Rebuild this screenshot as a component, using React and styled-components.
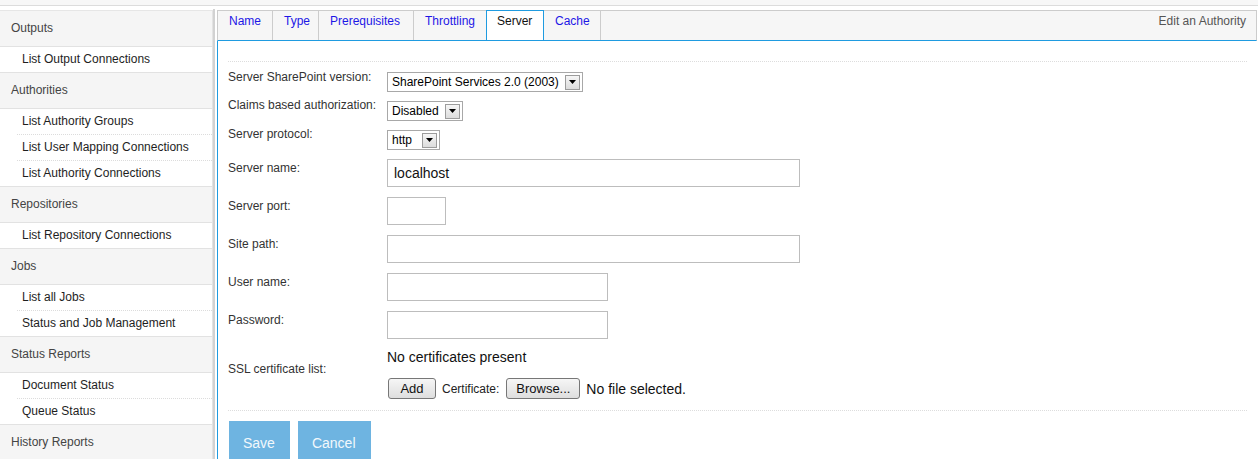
import React from "react";
import styled, { createGlobalStyle } from "styled-components";

const Global = createGlobalStyle`
	html, body {
		margin: 0;
		padding: 0;
		overflow: hidden;
		background: #fff;
		font-family: "Liberation Sans", Arial, sans-serif;
	}
`;

const BLUE = "#1f9be0";

const TopStrip = styled.div`
	height: 5px;
	background: #f7f7f7;
	border-bottom: 1px solid #dcdcdc;
`;

const Layout = styled.div`
	display: flex;
	margin-top: 4px;
	align-items: stretch;
`;

const Sidebar = styled.nav`
	width: 212px;
	flex: none;
	border-top: 1px solid #e6e6e6;
	border-right: 1px solid #e3e3e3;
`;

const GroupHeader = styled.div`
	box-sizing: border-box;
	height: 36px;
	display: flex;
	align-items: center;
	padding: 0 0 2px 11px;
	background: #f5f5f5;
	border-bottom: 1px solid #e2e2e2;
	font-size: 12px;
	color: #444;
`;

const NavItem = styled.div`
	box-sizing: border-box;
	height: 26px;
	display: flex;
	align-items: center;
	padding-bottom: 1px;
	margin-left: ${(p) => (p.$last ? "0" : "17px")};
	padding-left: ${(p) => (p.$last ? "22px" : "5px")};
	border-bottom: 1px ${(p) => (p.$last ? "solid #e2e2e2" : "dotted #dcdcdc")};
	font-size: 12px;
	color: #1e1e1e;
`;

const Divider = styled.div`
	width: 2px;
	flex: none;
	background: #d2d2d2;
	margin-top: -1px;
`;

const Main = styled.main`
	flex: 1;
	margin-left: 2px;
	margin-right: 1px;
	min-width: 0;
`;

const TabBar = styled.div`
	display: flex;
	height: 29px;
	background: #f6f6f6;
	border: 1px solid #cccccc;
	border-bottom: 1px solid ${BLUE};
`;

const Tab = styled.div`
	box-sizing: border-box;
	width: ${(p) => p.$width}px;
	padding: 3px 0 0 11px;
	font-size: 12px;
	line-height: 14px;
	color: ${(p) => (p.$active ? "#111" : "#1d17e6")};
	background: ${(p) => (p.$active ? "#fff" : "transparent")};
	border-right: 1px solid ${(p) => (p.$active ? BLUE : "#cccccc")};
	${(p) =>
		p.$active &&
		`
		border-left: 1px solid ${BLUE};
		border-top: 1px solid ${BLUE};
		margin: -1px 0 0 -1px;
		padding-left: 10px;
	`}
`;

const PageTitle = styled.div`
	margin-left: auto;
	padding: 3px 10px 0 0;
	font-size: 12px;
	line-height: 14px;
	color: #555;
`;

const Panel = styled.section`
	border-left: 1px solid ${BLUE};
	padding: 20px 10px 0 10px;
	min-height: 460px;
`;

const Rule = styled.div`
	border-top: 1px dotted #dddddd;
`;

const Form = styled.div`
	padding-top: 7px;
	padding-bottom: 11px;
`;

const Row = styled.div`
	display: flex;
	align-items: flex-start;
	margin-bottom: ${(p) => p.$gap}px;
`;

const Label = styled.div`
	width: 159px;
	flex: none;
	padding-top: ${(p) => p.$pad || 0}px;
	font-size: 12px;
	line-height: 14px;
	color: #333;
`;

const SelectBox = styled.div`
	box-sizing: border-box;
	width: ${(p) => p.$width}px;
	height: 20px;
	margin-top: 3px;
	display: flex;
	align-items: center;
	padding-left: 4px;
	border: 1px solid #a8a8a8;
	background: #fff;
`;

const SelectText = styled.span`
	flex: 1;
	font-size: 12px;
	color: #000;
	white-space: nowrap;
`;

const ArrowButton = styled.span`
	box-sizing: border-box;
	width: 15px;
	height: 15px;
	margin-right: 2px;
	display: flex;
	align-items: center;
	justify-content: center;
	border: 1px solid #9c9c9c;
	background: linear-gradient(#f6f6f6, #dcdcdc);
`;

const TextInput = styled.div`
	box-sizing: border-box;
	width: ${(p) => p.$width}px;
	height: 28px;
	display: flex;
	align-items: center;
	padding-left: 6px;
	border: 1px solid #bdbdbd;
	font-size: 14px;
	color: #111;
`;

const CertBlock = styled.div`
	display: flex;
	flex-direction: column;
`;

const CertNote = styled.div`
	font-size: 14px;
	line-height: 16px;
	color: #111;
`;

const CertLine = styled.div`
	display: flex;
	align-items: center;
	margin-top: 13px;
	font-size: 12px;
	color: #222;
`;

const PlainButton = styled.span`
	box-sizing: border-box;
	display: inline-flex;
	align-items: center;
	justify-content: center;
	width: ${(p) => p.$width}px;
	height: 21px;
	margin: 0 ${(p) => p.$after}px 0 ${(p) => p.$before || 0}px;
	border: 1px solid #777;
	border-radius: 3px;
	background: linear-gradient(#f6f6f6, #dedede);
	font-size: 13px;
	color: #111;
`;

const FileNote = styled.span`
	font-size: 14px;
	color: #111;
`;

const Actions = styled.div`
	display: flex;
	gap: 8px;
	padding: 10px 0 0 1px;
`;

const ActionButton = styled.div`
	height: 43px;
	padding: 0 15px 0 14px;
	display: flex;
	align-items: center;
	background: #6eb4e1;
	color: #f2f8fc;
	font-size: 14px;
`;

function Arrow() {
	return (
		<ArrowButton>
			<svg width="7" height="4" viewBox="0 0 7 4">
				<polygon points="0,0 7,0 3.5,4" fill="#000" />
			</svg>
		</ArrowButton>
	);
}

function Select({ width, value }) {
	return (
		<SelectBox $width={width}>
			<SelectText>{value}</SelectText>
			<Arrow />
		</SelectBox>
	);
}

const nav = [
	{ title: "Outputs", items: ["List Output Connections"] },
	{
		title: "Authorities",
		items: ["List Authority Groups", "List User Mapping Connections", "List Authority Connections"],
	},
	{ title: "Repositories", items: ["List Repository Connections"] },
	{ title: "Jobs", items: ["List all Jobs", "Status and Job Management"] },
	{ title: "Status Reports", items: ["Document Status", "Queue Status"] },
	{ title: "History Reports", items: [] },
];

const tabs = [
	{ name: "Name", width: 55 },
	{ name: "Type", width: 46 },
	{ name: "Prerequisites", width: 95 },
	{ name: "Throttling", width: 73 },
	{ name: "Server", width: 58 },
	{ name: "Cache", width: 57 },
];

export default function App() {
	return (
		<>
			<Global />
			<TopStrip />
			<Layout>
				<Sidebar>
					{nav.map((g) => (
						<React.Fragment key={g.title}>
							<GroupHeader>{g.title}</GroupHeader>
							{g.items.map((it, i) => (
								<NavItem key={it} $last={i === g.items.length - 1}>
									{it}
								</NavItem>
							))}
						</React.Fragment>
					))}
				</Sidebar>
				<Divider />
				<Main>
					<TabBar>
						{tabs.map((t) => (
							<Tab key={t.name} $width={t.width} $active={t.name === "Server"}>
								{t.name}
							</Tab>
						))}
						<PageTitle>Edit an Authority</PageTitle>
					</TabBar>
					<Panel>
						<Rule />
						<Form>
							<Row $gap={6}>
								<Label $pad={1}>Server SharePoint version:</Label>
								<Select width={196} value="SharePoint Services 2.0 (2003)" />
							</Row>
							<Row $gap={6}>
								<Label $pad={0}>Claims based authorization:</Label>
								<Select width={76} value="Disabled" />
							</Row>
							<Row $gap={9}>
								<Label $pad={0}>Server protocol:</Label>
								<Select width={53} value="http" />
							</Row>
							<Row $gap={10}>
								<Label $pad={2}>Server name:</Label>
								<TextInput $width={413}>localhost</TextInput>
							</Row>
							<Row $gap={10}>
								<Label $pad={2}>Server port:</Label>
								<TextInput $width={59} />
							</Row>
							<Row $gap={10}>
								<Label $pad={2}>Site path:</Label>
								<TextInput $width={413} />
							</Row>
							<Row $gap={10}>
								<Label $pad={2}>User name:</Label>
								<TextInput $width={221} />
							</Row>
							<Row $gap={10}>
								<Label $pad={2}>Password:</Label>
								<TextInput $width={221} />
							</Row>
							<Row $gap={0}>
								<Label $pad={13}>SSL certificate list:</Label>
								<CertBlock>
									<CertNote>No certificates present</CertNote>
									<CertLine>
										<PlainButton $width={48} $before={1} $after={6}>
											Add
										</PlainButton>
										Certificate:
										<PlainButton $width={74} $before={7} $after={6}>
											Browse...
										</PlainButton>
										<FileNote>No file selected.</FileNote>
									</CertLine>
								</CertBlock>
							</Row>
						</Form>
						<Rule />
						<Actions>
							<ActionButton>Save</ActionButton>
							<ActionButton>Cancel</ActionButton>
						</Actions>
					</Panel>
				</Main>
			</Layout>
		</>
	);
}
